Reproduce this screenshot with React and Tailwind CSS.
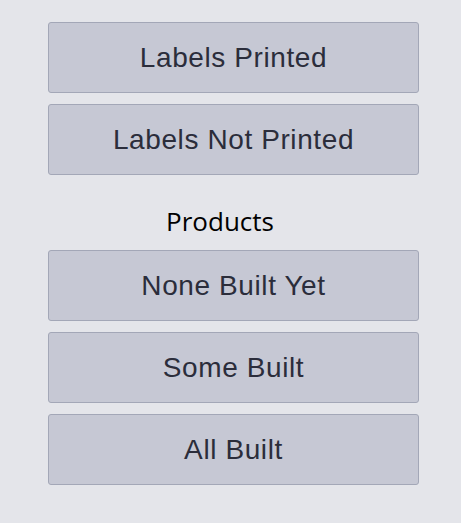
const buttons1 = ["Labels Printed", "Labels Not Printed"];
const buttons2 = ["None Built Yet", "Some Built", "All Built"];

function FilterButton({ label }) {
  return (
    <button className="h-[71px] w-[371px] rounded-[3px] border border-[#a3a7b7] bg-[#c6c8d4] text-[28px] tracking-[0.6px] text-[#2b2d3b] font-['Liberation_Sans',Arial,sans-serif]">
      {label}
    </button>
  );
}

export default function App() {
  return (
    <div className="h-[523px] w-[461px] bg-[#e4e5ea] pl-[48px] pt-[22px]">
      <div className="flex flex-col gap-[11px]">
        {buttons1.map((b) => (
          <FilterButton key={b} label={b} />
        ))}
      </div>
      <div className="flex h-[75px] w-[371px] items-center justify-center">
        <span className="-ml-[27px] mt-[18px] text-[26px] text-black font-['Open_Sans',sans-serif]">
          Products
        </span>
      </div>
      <div className="flex flex-col gap-[11px]">
        {buttons2.map((b) => (
          <FilterButton key={b} label={b} />
        ))}
      </div>
    </div>
  );
}
